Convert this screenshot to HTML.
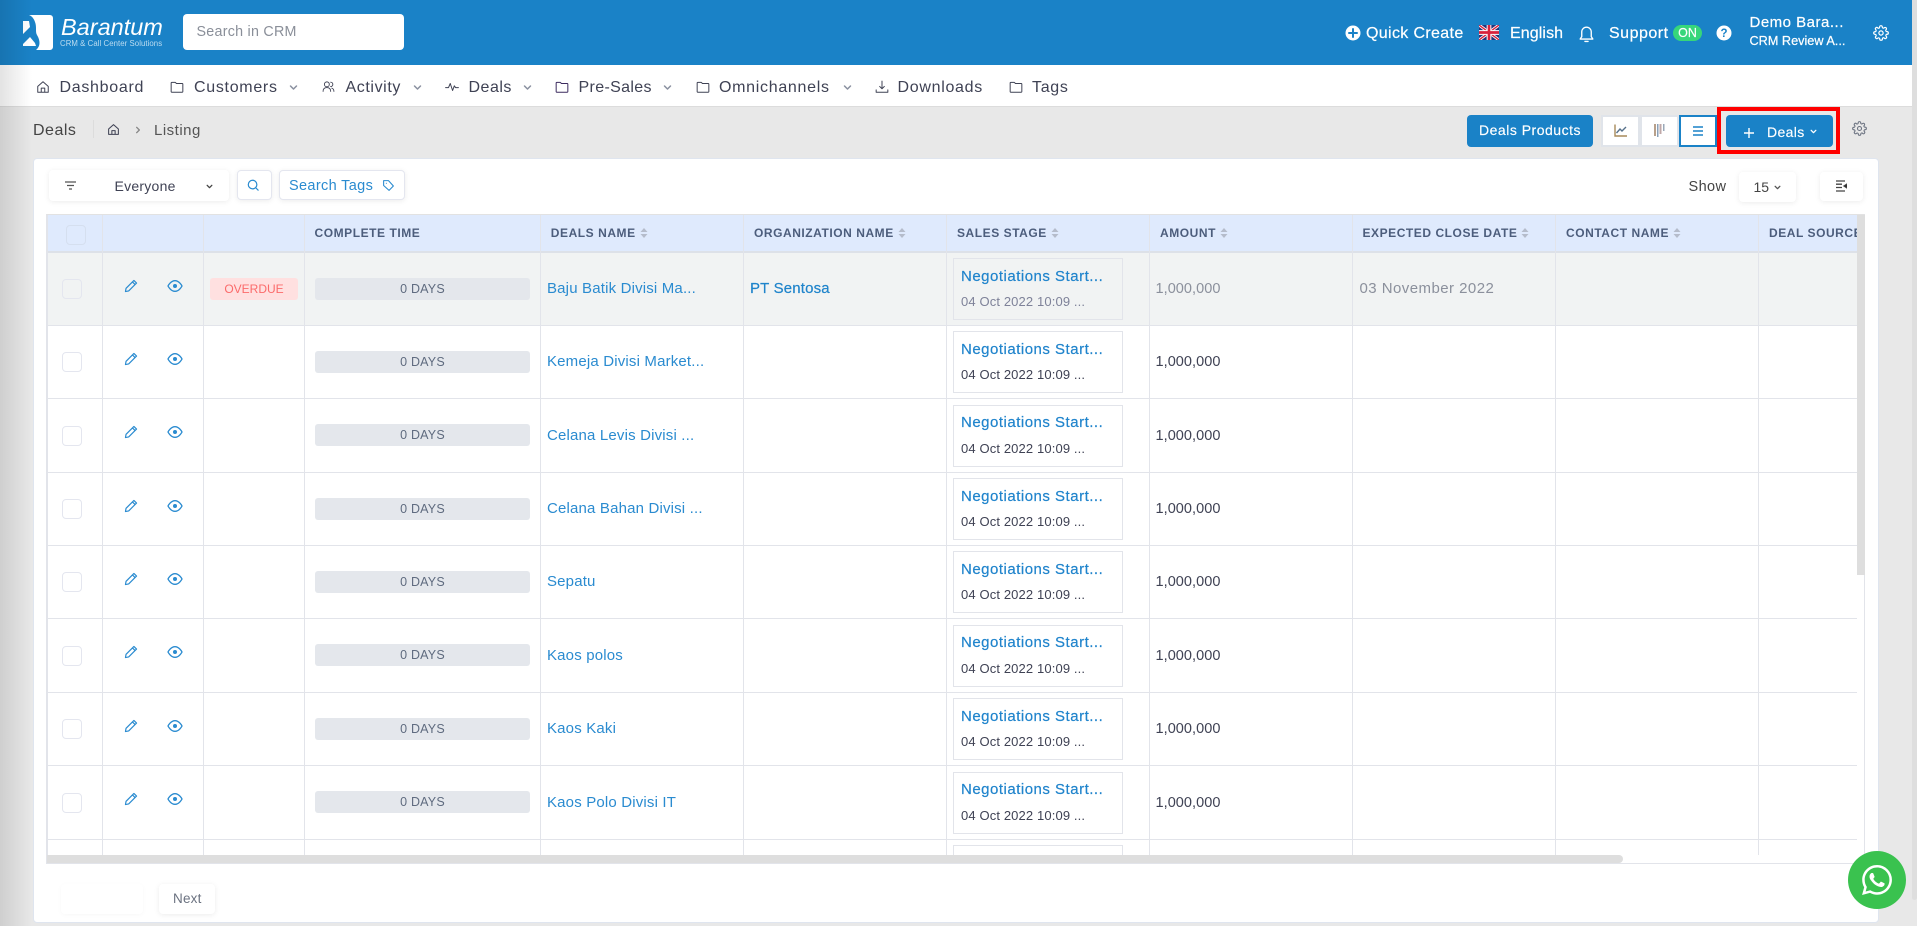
<!DOCTYPE html>
<html><head><meta charset="utf-8"><title>Deals</title>
<style>
html,body{margin:0;padding:0;width:1917px;height:926px;overflow:hidden;background:#e8e8e8;font-family:"Liberation Sans",sans-serif;color:#3f4254}
div,span,svg{box-sizing:border-box}
.a,.t,svg.i{position:absolute}
.t{white-space:nowrap;line-height:20px}
svg.i{fill:none;stroke-linecap:round;stroke-linejoin:round}
.n{font-size:16px;letter-spacing:.7px;color:#3f4254;top:78px}
.w{color:#fff;-webkit-text-stroke:.2px #fff}
.s{stroke:#3f4254;stroke-width:1.7}
.ch{stroke:#8a90a0;stroke-width:2}
.box{position:absolute;background:#fff;border-radius:4px;box-shadow:0 1px 6px rgba(0,0,0,.08)}
.r{position:absolute;left:0;width:1810px;height:73.43px;border-bottom:1px solid #e2e4ea}
.cb{position:absolute;left:15px;top:26.5px;width:20px;height:20px;border:1px solid #e4e6ef;border-radius:4px;background:#fff}
.p{position:absolute;left:77px;top:26px;width:14px;height:14px;stroke:#2a8bd0;stroke-width:2;fill:none}
.e{position:absolute;left:120px;top:26px;width:16px;height:14px;stroke:#2a8bd0;stroke-width:2;fill:none}
.d{position:absolute;left:268px;top:25px;width:215px;height:22px;background:#e4e7ec;border-radius:3px;color:#5f6b7f;font-size:12.5px;text-align:center;line-height:22px;letter-spacing:.2px}
.o{position:absolute;left:163px;top:25px;width:88px;height:22px;background:#ffe0e0;border-radius:3px;color:#fb6b6b;font-size:12px;text-align:center;line-height:22px}
.l{position:absolute;left:500px;top:26.5px;line-height:20px;font-size:15px;letter-spacing:.17px;color:#2a8bd0;white-space:nowrap}
.sb{position:absolute;left:906px;top:5.5px;width:170px;height:62px;border:1px solid #e2e4ea}
.s1{position:absolute;left:7px;top:7.5px;line-height:20px;font-size:15px;letter-spacing:.5px;color:#2084cc;white-space:nowrap;-webkit-text-stroke:.2px #2084cc}
.s2{position:absolute;left:7px;top:33px;line-height:20px;font-size:13px;letter-spacing:.13px;color:#3f4254;white-space:nowrap}
.m{position:absolute;left:1108.5px;top:26.5px;line-height:20px;font-size:14.5px;letter-spacing:.05px;color:#3f4254}
.g .s2{color:#7e8299}.g .m{color:#8b909c}.g{background:#f1f3f3}
.v{position:absolute;top:0;width:1px;height:640px;background:#e2e4ea}
.h{position:absolute;top:8px;line-height:20px;font-size:12px;font-weight:bold;letter-spacing:.55px;color:#4c5d7c;white-space:nowrap}
.sa{display:inline-block;vertical-align:-1px;margin-left:4px;width:8px;height:10px;stroke:none;fill:#b5bccb;position:static}
</style></head><body>
<svg width="0" height="0" style="position:absolute">
<defs>
<symbol id="pen" viewBox="0 0 24 24"><path d="M17 2.5l4.5 4.5L8 20.500 2.500 21.500l1-5.500zM14.500 5l4.500 4.500" stroke-linejoin="round" stroke-linecap="round"/></symbol>
<symbol id="eye" viewBox="0 0 24 20"><path d="M1.500 10S5.500 2 12 2s10.500 8 10.500 8-4 8-10.500 8S1.500 10 1.500 10z"/><circle cx="12" cy="10" r="3" fill="#2a8bd0" stroke="none"/></symbol>
<symbol id="arr" viewBox="0 0 8 10"><path d="M4 0l3.500 4h-7zM4 10l-3.500-4h7z"/></symbol>
<symbol id="fold" viewBox="0 0 24 24"><path d="M2 5a1 1 0 0 1 1-1h6l2 2h10a1 1 0 0 1 1 1v13a1 1 0 0 1-1 1H3a1 1 0 0 1-1-1z"/></symbol>
<symbol id="chev" viewBox="0 0 12 12"><path d="M2 4l4 4 4-4"/></symbol>
<symbol id="home" viewBox="0 0 24 24"><path d="M3 11l9-8 9 8v10H3zM9 21v-7h6v7"/></symbol>
<symbol id="gear" viewBox="0 0 24 24"><circle cx="12" cy="12" r="3.200"/><path d="M19.400 15a1.650 1.650 0 0 0 .33 1.820l.06.06a2 2 0 0 1-2.830 2.830l-.06-.06a1.650 1.650 0 0 0-2.820 1.180V21a2 2 0 0 1-4 0v-.09A1.650 1.650 0 0 0 9 19.400a1.650 1.650 0 0 0-1.820.33l-.06.06a2 2 0 0 1-2.830-2.830l.06-.06a1.650 1.650 0 0 0-1.180-2.820H3a2 2 0 0 1 0-4h.09A1.650 1.650 0 0 0 4.600 9a1.650 1.650 0 0 0-.33-1.820l-.06-.06a2 2 0 0 1 2.830-2.830l.06.06a1.650 1.650 0 0 0 2.820-1.180V3a2 2 0 0 1 4 0v.09a1.650 1.650 0 0 0 2.820 1.180l.06-.06a2 2 0 0 1 2.830 2.830l-.06.06a1.650 1.650 0 0 0 1.180 2.820H21a2 2 0 0 1 0 4h-.09A1.650 1.650 0 0 0 19.400 15z"/></symbol>
</defs></svg>

<!-- Header -->
<div class="a" style="left:0;top:0;width:1912px;height:65px;background:#1a82c7"></div>
<svg class="a" style="left:23px;top:15px" width="30" height="35" viewBox="0 0 30 35"><path fill="#fff" d="M6 0H27a3 3 0 0 1 3 3V32a3 3 0 0 1-3 3H13C18 31 17 25 14 20C12 17 14 12 12 7C11 4 9 1 6 0Z"/><path fill="#fff" d="M0 6L6 6L7 12L0 19ZM0 29L7 22L12 28L13 31L0 31Z"/></svg>
<div class="t" style="left:61px;top:16px;font-size:23.500px;line-height:22px;font-style:italic;color:#fff">Barantum</div>
<div class="t" style="left:60px;top:34px;font-size:7.800px;letter-spacing:.06px;color:#bcdcf0">CRM &amp; Call Center Solutions</div>
<div class="box" style="left:183px;top:14px;width:221px;height:36px;box-shadow:none"></div>
<div class="t" style="left:196.500px;top:22px;font-size:14.300px;letter-spacing:.25px;color:#8a8f99">Search in CRM</div>
<svg class="i" style="left:1345px;top:25px" width="16" height="16" viewBox="0 0 16 16"><circle cx="8" cy="8" r="7.500" fill="#fff"/><path d="M8 4v8M4 8h8" stroke="#1a82c7" stroke-width="2"/></svg>
<div class="t w" style="left:1366px;top:24px;font-size:16px;letter-spacing:.35px">Quick Create</div>
<svg class="a" style="left:1479px;top:25px" width="20" height="15" viewBox="0 0 60 45"><rect width="60" height="45" fill="#24337a"/><path d="M0 0L60 45M60 0L0 45" stroke="#fff" stroke-width="9"/><path d="M0 0L60 45M60 0L0 45" stroke="#d8213c" stroke-width="4"/><path d="M30 0V45M0 22.500H60" stroke="#fff" stroke-width="14"/><path d="M30 0V45M0 22.500H60" stroke="#d8213c" stroke-width="8"/></svg>
<div class="t w" style="left:1510px;top:24px;font-size:16px;letter-spacing:.1px">English</div>
<svg class="i" style="left:1577px;top:24px;stroke:#fff;stroke-width:1.700" width="19" height="19" viewBox="0 0 24 24"><path d="M18 16V10a6 6 0 0 0-12 0v6l-2 3h16zM10 22h4"/></svg>
<div class="t w" style="left:1609px;top:24px;font-size:16px;letter-spacing:.5px">Support</div>
<div class="a" style="left:1673px;top:25px;width:29px;height:16px;background:#37d67a;border-radius:8px;color:#fff;font-size:12.500px;text-align:center;line-height:16px;-webkit-text-stroke:.15px #fff">ON</div>
<svg class="a" style="left:1716px;top:25px" width="16" height="16" viewBox="0 0 16 16"><circle cx="8" cy="8" r="7.500" fill="#fff"/><text x="8" y="12.200" font-family="Liberation Sans" font-size="11.500" font-weight="bold" text-anchor="middle" fill="#1a82c7">?</text></svg>
<div class="t w" style="left:1749.500px;top:13px;font-size:15px;letter-spacing:.5px">Demo Bara...</div>
<div class="t w" style="left:1749.500px;top:31px;font-size:12.700px">CRM Review A...</div>
<svg class="i" style="left:1873px;top:25px;stroke:#fff;stroke-width:1.800" width="16" height="16"><use href="#gear"/></svg>

<!-- Nav -->
<div class="a" style="left:0;top:65px;width:1912px;height:42px;background:#fff;border-bottom:1px solid #dcdcdc"></div>
<svg class="i s" style="left:36px;top:80px" width="14" height="14"><use href="#home"/></svg>
<div class="t n" style="left:59.500px">Dashboard</div>
<svg class="i s" style="left:170px;top:80px" width="14" height="14"><use href="#fold"/></svg>
<div class="t n" style="left:194px">Customers</div>
<svg class="i ch" style="left:289px;top:83px" width="9" height="9"><use href="#chev"/></svg>
<svg class="i s" style="left:322px;top:80px" width="13" height="13" viewBox="0 0 24 24"><circle cx="9" cy="8" r="4.500"/><path d="M2 21c0-5 3-7 7-7s7 2 7 7M16 4a4 4 0 0 1 0 8M18 15c3 1 4 3 4 6"/></svg>
<div class="t n" style="left:345.500px;letter-spacing:.6px">Activity</div>
<svg class="i ch" style="left:413px;top:83px" width="9" height="9"><use href="#chev"/></svg>
<svg class="i s" style="left:445px;top:80px" width="14" height="14" viewBox="0 0 24 24"><path d="M1 13h5l3-7 4 12 3-8 2 3h5"/></svg>
<div class="t n" style="left:468.500px;letter-spacing:.5px">Deals</div>
<svg class="i ch" style="left:523px;top:83px" width="9" height="9"><use href="#chev"/></svg>
<svg class="i s" style="left:555px;top:80px;stroke:#3b2a5e" width="14" height="14"><use href="#fold"/></svg>
<div class="t n" style="left:578.500px;letter-spacing:.35px">Pre-Sales</div>
<svg class="i ch" style="left:663px;top:83px" width="9" height="9"><use href="#chev"/></svg>
<svg class="i s" style="left:695.500px;top:80px" width="14" height="14"><use href="#fold"/></svg>
<div class="t n" style="left:719px">Omnichannels</div>
<svg class="i ch" style="left:843px;top:83px" width="9" height="9"><use href="#chev"/></svg>
<svg class="i s" style="left:875px;top:80px" width="14" height="14" viewBox="0 0 24 24"><path d="M12 2v12M8 11l4 4 4-4M2 17v4h20v-4"/></svg>
<div class="t n" style="left:897.500px">Downloads</div>
<svg class="i s" style="left:1009px;top:80px" width="14" height="14"><use href="#fold"/></svg>
<div class="t n" style="left:1032px">Tags</div>

<!-- Breadcrumb -->
<div class="t" style="left:33px;top:120.500px;font-size:16px;letter-spacing:.5px;color:#444">Deals</div>
<div class="a" style="left:93px;top:120px;width:1px;height:18px;background:#dcdcdc"></div>
<svg class="i s" style="left:107px;top:123px;stroke-width:1.900" width="13" height="13"><use href="#home"/></svg>
<svg class="i" style="left:134px;top:126px;stroke:#888;stroke-width:2" width="8" height="8" viewBox="0 0 12 12"><path d="M4 2l4 4-4 4"/></svg>
<div class="t" style="left:154px;top:120.500px;font-size:15px;letter-spacing:.5px;color:#555">Listing</div>

<!-- Right actions -->
<div class="a w" style="left:1467px;top:115px;width:126px;height:32px;background:#1a82c7;border-radius:4px;text-align:center;line-height:31px;font-size:14px;letter-spacing:.5px;-webkit-text-stroke:.15px #fff">Deals Products</div>
<div class="a" style="left:1601px;top:115px;width:79px;height:32px;background:#e0e4ea"></div>
<div class="a" style="left:1603px;top:117px;width:35px;height:28px;background:#fff"></div>
<div class="a" style="left:1642px;top:117px;width:35px;height:28px;background:#fff"></div>
<div class="a" style="left:1679px;top:115px;width:38px;height:32px;background:#fff;border:2px solid #1a82c7"></div>
<svg class="a" style="left:1614px;top:124px;fill:none;stroke-width:1.400" width="13" height="13" viewBox="0 0 13 13"><path d="M1 .5V12H13" stroke="#a78a5a"/><path d="M2.500 9L6 5l2 2 4-4" stroke="#56708a"/></svg>
<svg class="a" style="left:1654px;top:124px" width="11" height="13" viewBox="0 0 11 13"><rect x="0" y="0" width="2" height="12" fill="#b8a08a"/><rect x="3" y="0" width="1.500" height="13" fill="#8aa0b8"/><rect x="5.500" y="0" width="2" height="10" fill="#c0a8a8"/><rect x="9" y="0" width="1.500" height="7" fill="#9aa8b8"/></svg>
<svg class="a" style="left:1692px;top:125px;stroke:#1a82c7;stroke-width:1.600" width="12" height="12" viewBox="0 0 12 12"><path d="M1 2h10M1 6h10M1 10h10"/></svg>
<div class="a" style="left:1717px;top:107px;width:123px;height:47px;border:solid #f00;border-width:4px 4.500px"></div>
<div class="a" style="left:1726px;top:115px;width:107px;height:32px;background:#1a82c7;border-radius:4px"></div>
<svg class="a" style="left:1744px;top:127.500px;stroke:#fff;stroke-width:1.400" width="10" height="10" viewBox="0 0 10 10"><path d="M5 0v10M0 5h10"/></svg>
<div class="t w" style="left:1767px;top:121.500px;font-size:14px;letter-spacing:.35px;-webkit-text-stroke:.15px #fff">Deals</div>
<svg class="i" style="left:1810px;top:128px;stroke:#fff;stroke-width:2.200" width="7" height="7"><use href="#chev"/></svg>
<svg class="i" style="left:1852px;top:121px;stroke:#6b7280;stroke-width:1.700" width="15" height="15"><use href="#gear"/></svg>

<!-- Card -->
<div class="a" style="left:33px;top:157.500px;width:1845.500px;height:765.500px;background:#fff;border:1px solid #dfe5ef;border-radius:4px"></div>

<div class="box" style="left:49px;top:170px;width:180px;height:31px"></div>
<svg class="a" style="left:65px;top:181px;stroke:#555;stroke-width:1.300" width="11" height="9" viewBox="0 0 11 9"><path d="M0 1h11M2 4.500h7M4 8h3"/></svg>
<div class="t" style="left:114.500px;top:175.500px;font-size:14px;letter-spacing:.25px;color:#3f4254">Everyone</div>
<svg class="i" style="left:206px;top:183px;stroke:#444;stroke-width:2.200" width="7" height="7"><use href="#chev"/></svg>
<div class="box" style="left:237px;top:170px;width:34.500px;height:30px;border:1px solid #e4e6ef"></div>
<svg class="i" style="left:247px;top:179px;stroke:#2a8bd0;stroke-width:1.400" width="12" height="12" viewBox="0 0 14 14"><circle cx="6.500" cy="6.500" r="5"/><path d="M10.500 10.500L13 13"/></svg>
<div class="box" style="left:279px;top:170px;width:125.500px;height:30px;border:1px solid #e4e6ef"></div>
<div class="t" style="left:289px;top:175.500px;font-size:14.500px;letter-spacing:.35px;color:#2a8bd0">Search Tags</div>
<svg class="i" style="left:381.500px;top:179px;stroke:#2a8bd0;stroke-width:2" width="13" height="13" viewBox="0 0 24 24"><path d="M3 3h9l9 10-8 8L3 12zM8 8h.01"/></svg>

<div class="t" style="left:1688.500px;top:177px;font-size:14.500px;letter-spacing:.4px;color:#444">Show</div>
<div class="box" style="left:1739px;top:172px;width:57px;height:30px"></div>
<div class="t" style="left:1753.500px;top:177px;font-size:14px;color:#444">15</div>
<svg class="i" style="left:1773.500px;top:184px;stroke:#555;stroke-width:2.200" width="7" height="7"><use href="#chev"/></svg>
<div class="box" style="left:1820px;top:172px;width:43px;height:29px"></div>
<svg class="a" style="left:1836px;top:180px;stroke:#444;stroke-width:1.300" width="11" height="12" viewBox="0 0 11 12"><path d="M0 1h9M0 4.200h6M0 7.500h6M0 11h9M11 4v4L8 6z"/></svg>

<!-- Table -->
<div class="a" style="left:46px;top:214px;width:1819px;height:650px;border:1px solid #e2e4ea;border-top:1.500px solid #e2e2e2"></div>
<div class="a" style="left:47px;top:215px;width:1810px;height:640px;overflow:hidden;background:#fff">
 <div class="a" style="left:0;top:0;width:1810px;height:38px;background:#dfeafd;border-bottom:2px solid #dde1e8"></div>
 <div class="cb" style="left:19px;top:10px;background:#dfeafd;border-color:#d5dfef"></div>
 <div class="h" style="left:267.500px">COMPLETE TIME</div>
 <div class="h" style="left:503.800px">DEALS NAME<svg class="sa"><use href="#arr"/></svg></div>
 <div class="h" style="left:707px">ORGANIZATION NAME<svg class="sa"><use href="#arr"/></svg></div>
 <div class="h" style="left:910px">SALES STAGE<svg class="sa"><use href="#arr"/></svg></div>
 <div class="h" style="left:1113px">AMOUNT<svg class="sa"><use href="#arr"/></svg></div>
 <div class="h" style="left:1315.500px">EXPECTED CLOSE DATE<svg class="sa"><use href="#arr"/></svg></div>
 <div class="h" style="left:1519px">CONTACT NAME<svg class="sa"><use href="#arr"/></svg></div>
 <div class="h" style="left:1722px">DEAL SOURCE</div>

 <div class="r g" style="top:37.500px"><div class="cb" style="background:#f1f3f3"></div><svg class="p"><use href="#pen"/></svg><svg class="e"><use href="#eye"/></svg><div class="o">OVERDUE</div><div class="d">0 DAYS</div><div class="l">Baju Batik Divisi Ma...</div><div class="l" style="left:703px;color:#1f84cb;-webkit-text-stroke:.2px #1f84cb">PT Sentosa</div><div class="sb"><div class="s1">Negotiations Start...</div><div class="s2">04 Oct 2022 10:09 ...</div></div><div class="m">1,000,000</div><div class="m" style="left:1312.500px;font-size:15px;letter-spacing:.45px">03 November 2022</div></div>

 <div class="r" style="top:110.900px"><div class="cb"></div><svg class="p"><use href="#pen"/></svg><svg class="e"><use href="#eye"/></svg><div class="d">0 DAYS</div><div class="l">Kemeja Divisi Market...</div><div class="sb"><div class="s1">Negotiations Start...</div><div class="s2">04 Oct 2022 10:09 ...</div></div><div class="m">1,000,000</div></div>

 <div class="r" style="top:184.400px"><div class="cb"></div><svg class="p"><use href="#pen"/></svg><svg class="e"><use href="#eye"/></svg><div class="d">0 DAYS</div><div class="l">Celana Levis Divisi ...</div><div class="sb"><div class="s1">Negotiations Start...</div><div class="s2">04 Oct 2022 10:09 ...</div></div><div class="m">1,000,000</div></div>

 <div class="r" style="top:257.800px"><div class="cb"></div><svg class="p"><use href="#pen"/></svg><svg class="e"><use href="#eye"/></svg><div class="d">0 DAYS</div><div class="l">Celana Bahan Divisi ...</div><div class="sb"><div class="s1">Negotiations Start...</div><div class="s2">04 Oct 2022 10:09 ...</div></div><div class="m">1,000,000</div></div>

 <div class="r" style="top:330.700px"><div class="cb"></div><svg class="p"><use href="#pen"/></svg><svg class="e"><use href="#eye"/></svg><div class="d">0 DAYS</div><div class="l">Sepatu</div><div class="sb"><div class="s1">Negotiations Start...</div><div class="s2">04 Oct 2022 10:09 ...</div></div><div class="m">1,000,000</div></div>

 <div class="r" style="top:404.200px"><div class="cb"></div><svg class="p"><use href="#pen"/></svg><svg class="e"><use href="#eye"/></svg><div class="d">0 DAYS</div><div class="l">Kaos polos</div><div class="sb"><div class="s1">Negotiations Start...</div><div class="s2">04 Oct 2022 10:09 ...</div></div><div class="m">1,000,000</div></div>

 <div class="r" style="top:477.800px"><div class="cb"></div><svg class="p"><use href="#pen"/></svg><svg class="e"><use href="#eye"/></svg><div class="d">0 DAYS</div><div class="l">Kaos Kaki</div><div class="sb"><div class="s1">Negotiations Start...</div><div class="s2">04 Oct 2022 10:09 ...</div></div><div class="m">1,000,000</div></div>

 <div class="r" style="top:551.200px"><div class="cb"></div><svg class="p"><use href="#pen"/></svg><svg class="e"><use href="#eye"/></svg><div class="d">0 DAYS</div><div class="l">Kaos Polo Divisi IT</div><div class="sb"><div class="s1">Negotiations Start...</div><div class="s2">04 Oct 2022 10:09 ...</div></div><div class="m">1,000,000</div></div>

 <div class="r" style="top:624.900px;border:none"><div class="sb"></div></div>

 <div class="v" style="left:0"></div><div class="v" style="left:55px"></div><div class="v" style="left:156px"></div><div class="v" style="left:257px"></div><div class="v" style="left:493px"></div><div class="v" style="left:696px"></div><div class="v" style="left:899px"></div><div class="v" style="left:1102px"></div><div class="v" style="left:1305px"></div><div class="v" style="left:1508px"></div><div class="v" style="left:1711px"></div>
</div>
<!-- Table scrollbars -->
<div class="a" style="left:1857px;top:215px;width:8px;height:360px;background:#dedede"></div>
<div class="a" style="left:47px;top:855px;width:1576px;height:8px;background:#dedede;border-radius:0 4px 4px 0"></div>

<!-- Pagination -->
<div class="box" style="left:61px;top:884px;width:82px;height:30px;box-shadow:0 1px 5px rgba(0,0,0,.03)"></div>
<div class="box" style="left:159px;top:884px;width:56px;height:30px"></div>
<div class="t" style="left:173px;top:889px;font-size:13.500px;letter-spacing:.2px;color:#6b7280">Next</div>

<!-- Page scrollbar + left shadow -->
<div class="a" style="left:1912px;top:0;width:5px;height:900px;background:#dedede;border-radius:0 0 3px 3px"></div>
<div class="a" style="left:0;top:0;width:32px;height:926px;background:linear-gradient(to right,rgba(0,0,0,.11),rgba(0,0,0,0))"></div>

<!-- WhatsApp -->
<div class="a" style="left:1848px;top:851px;width:58px;height:58px;border-radius:50%;background:#3ac24f"></div>
<svg class="a" style="left:1862px;top:865px" width="30" height="30" viewBox="0 0 24 24"><path fill="#fff" d="M17.472 14.382c-.297-.149-1.758-.867-2.03-.967-.273-.099-.471-.148-.67.15-.197.297-.767.966-.94 1.164-.173.199-.347.223-.644.075-.297-.15-1.255-.463-2.39-1.475-.883-.788-1.48-1.761-1.653-2.059-.173-.297-.018-.458.13-.606.134-.133.298-.347.446-.52.149-.174.198-.298.298-.497.099-.198.05-.371-.025-.52-.075-.149-.669-1.612-.916-2.207-.242-.579-.487-.5-.669-.51-.173-.008-.371-.01-.57-.01-.198 0-.52.074-.792.372-.272.297-1.04 1.016-1.04 2.479 0 1.462 1.065 2.875 1.213 3.074.149.198 2.096 3.2 5.077 4.487.709.306 1.262.489 1.694.625.712.227 1.36.195 1.871.118.571-.085 1.758-.719 2.006-1.413.248-.694.248-1.289.173-1.413-.074-.124-.272-.198-.57-.347m-5.421 7.403h-.004a9.87 9.87 0 01-5.031-1.378l-.361-.214-3.741.982.998-3.648-.235-.374a9.86 9.86 0 01-1.51-5.26c.001-5.45 4.436-9.884 9.888-9.884 2.64 0 5.122 1.03 6.988 2.898a9.825 9.825 0 012.893 6.994c-.003 5.45-4.437 9.884-9.885 9.884m8.413-18.297A11.815 11.815 0 0012.05 0C5.495 0 .16 5.335.157 11.892c0 2.096.547 4.142 1.588 5.945L.057 24l6.305-1.654a11.882 11.882 0 005.683 1.448h.005c6.554 0 11.89-5.335 11.893-11.893a11.821 11.821 0 00-3.48-8.413z"/></svg>
</body></html>
